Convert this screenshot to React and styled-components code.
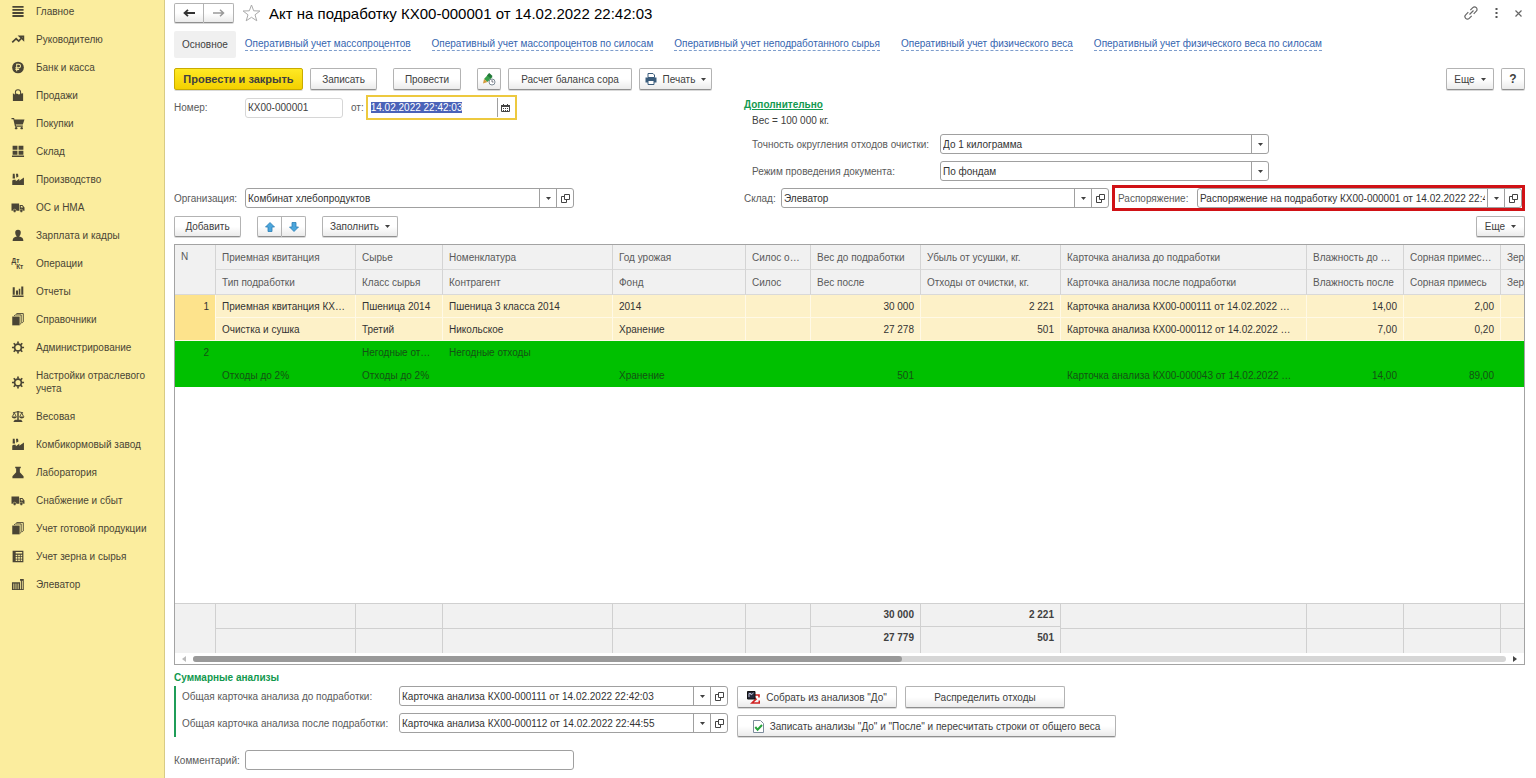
import { useEffect, useRef } from "react";
import styled, { createGlobalStyle } from "styled-components";

const menu = [
    ["main", "Главное"],
    ["trend", "Руководителю"],
    ["ruble", "Банк и касса"],
    ["bag", "Продажи"],
    ["cart", "Покупки"],
    ["boxes", "Склад"],
    ["factory", "Производство"],
    ["truck", "ОС и НМА"],
    ["person", "Зарплата и кадры"],
    ["dtkt", "Операции"],
    ["bars", "Отчеты"],
    ["books", "Справочники"],
    ["gear", "Администрирование"],
    ["gear", "Настройки отраслевого учета"],
    ["scales", "Весовая"],
    ["factory", "Комбикормовый завод"],
    ["flask", "Лаборатория"],
    ["truck", "Снабжение и сбыт"],
    ["books", "Учет готовой продукции"],
    ["ledger", "Учет зерна и сырья"],
    ["elevator", "Элеватор"],
];

const tabs = [
    "Оперативный учет массопроцентов",
    "Оперативный учет массопроцентов по силосам",
    "Оперативный учет неподработанного сырья",
    "Оперативный учет физического веса",
    "Оперативный учет физического веса по силосам",
];

const columns = [
    { top: "Приемная квитанция", bottom: "Тип подработки", width: 140 },
    { top: "Сырье", bottom: "Класс сырья", width: 87 },
    { top: "Номенклатура", bottom: "Контрагент", width: 170 },
    { top: "Год урожая", bottom: "Фонд", width: 133 },
    { top: "Силос о…", bottom: "Силос", width: 65 },
    { top: "Вес до подработки", bottom: "Вес после", width: 110, number: true, totals: ["30 000", "27 779"] },
    { top: "Убыль от усушки, кг.", bottom: "Отходы от очистки, кг.", width: 140, number: true, totals: ["2 221", "501"] },
    { top: "Карточка анализа до подработки", bottom: "Карточка анализа после подработки" },
    { top: "Влажность до …", bottom: "Влажность после", width: 97, number: true },
    { top: "Сорная примес…", bottom: "Сорная примесь", width: 97, number: true },
    { top: "Зер", bottom: "Зер", width: 24 },
];

const rows = [
    {
        top: ["Приемная квитанция КХ…", "Пшеница 2014", "Пшеница 3 класса 2014", "2014", "", "30 000", "2 221", "Карточка анализа КХ00-000111 от 14.02.2022 …", "14,00", "2,00", ""],
        bottom: ["Очистка и сушка", "Третий", "Никольское", "Хранение", "", "27 278", "501", "Карточка анализа КХ00-000112 от 14.02.2022 …", "7,00", "0,20", ""],
    },
    {
        waste: true,
        top: ["", "Негодные от…", "Негодные отходы", "", "", "", "", "", "", "", ""],
        bottom: ["Отходы до 2%", "Отходы до 2%", "", "Хранение", "", "501", "", "Карточка анализа КХ00-000043 от 14.02.2022 …", "14,00", "89,00", ""],
    },
];

function MenuIcon({ name }) {
    return (
        <MenuSvg viewBox="0 0 14 14" aria-hidden="true">
            {name === "main" && <path d="M1 1h12v2H1zM1 4.3h12v2H1zM1 7.6h12v2H1zM1 10.900h12v2H1z" />}
            {name === "trend" && <path d="M.8 10.2 5 6.2l2.8 2.5 3.6-3.9M8.8 3.6h4v3.8z" fill="none" stroke="#4a4535" strokeWidth="1.8" />}
            {name === "ruble" && (
                <>
                    <circle cx="7" cy="7" r="6.3" />
                    <path d="M5.6 11V3.6h2.2a1.9 1.9 0 0 1 0 3.8H4.2M4.2 9.2h4" fill="none" stroke="#fbed9e" strokeWidth="1.1" />
                </>
            )}
            {name === "bag" && (
                <>
                    <path d="M1.5 4.5 3.5 6l2-1.2L8 6l2.6-1.2 1.9-.3V13h-11z" />
                    <path d="M4.2 7V3.5a2.8 2.8 0 0 1 5.6 0V7" fill="none" stroke="#4a4535" strokeWidth="1.1" />
                </>
            )}
            {name === "cart" && (
                <>
                    <path d="M0 1.2h2.8l.4 1.4H14l-1.8 5.6H4.6l.3 1h7.3v1.2H3.8L2 2.4H0z" />
                    <circle cx="5" cy="12" r="1.3" />
                    <circle cx="11" cy="12" r="1.3" />
                </>
            )}
            {name === "boxes" && <path d="M1.2.8h5.2v4.4H1.2zM7.6.8h5.2v4.4H7.6zM1.2 6.1h5.2v4.4H1.2zM7.6 6.1h5.2v4.4H7.6zM.5 11.300h13V13H.5z" />}
            {name === "factory" && <path d="M.8 12.800V8.2l1.600-1h2.200v1.600l3.8-2.7v2.2l5-3.500v8zM1.4.8h2l.4 5H1.200zM4.800.8h2.200l.5 3-2.200 1.400z" />}
            {name === "truck" && (
                <>
                    <path d="M0 2.800h8.200v7.600H0zM8.800 4.2h3l2.200 2.800v3.400H8.800z" />
                    <path d="M10 5.4h1.4l1.2 1.6H10z" fill="#fbed9e" />
                    <circle cx="3.4" cy="10.6" r="1.7" stroke="#fbed9e" strokeWidth=".5" />
                    <circle cx="10.6" cy="10.6" r="1.7" stroke="#fbed9e" strokeWidth=".5" />
                </>
            )}
            {name === "person" && <path d="M7 .8a3 3 0 0 1 3 3c0 1.8-.9 3.7-1.8 4.2 2.8.5 4.6 1.6 4.6 4.8H1.200C1.200 9.600 3 8.500 5.800 8 4.900 7.500 4 5.600 4 3.800a3 3 0 0 1 3-3z" />}
            {name === "dtkt" && (
                <>
                    <text x="0" y="6" fontSize="7" fontWeight="700">Дт</text>
                    <text x="5" y="13" fontSize="7" fontWeight="700">Кт</text>
                </>
            )}
            {name === "bars" && <path d="M1.300 2.500h2.200v8H1.300zM4.800 6h2.200v4.500H4.800zM7.800 4h1.700v6.500H7.800zM10.500 1.500h2.200v9h-2.200zM1 11.300h12v1.500H1z" />}
            {name === "books" && (
                <>
                    <path d="M.8 3.800h8v9.500h-8z" />
                    <path d="M2.800 3 4 2.100h6.400v9l-1.200 1M5 1.200 5.800.6h6.900v9l-1.200 1" fill="none" stroke="#4a4535" />
                </>
            )}
            {name === "gear" && (
                <>
                    <circle cx="7" cy="7" r="3.7" fill="none" stroke="#4a4535" strokeWidth="1.9" />
                    <path d="M7 .5v2.500M7 11v2.500M.5 7H3M11 7h2.500M2.400 2.400l1.800 1.800M9.800 9.800l1.800 1.800M11.600 2.400 9.800 4.200M4.200 9.800l-1.800 1.800" stroke="#4a4535" strokeWidth="1.800" />
                </>
            )}
            {name === "scales" && (
                <>
                    <path d="M6.200 1h1.600v9.500h2.700l1.500 2.300H2l1.500-2.300h2.700zM0 7h6Q5.300 9.200 3 9.200.700 9.200 0 7zM8 7h6q-.7 2.200-3 2.200T8 7z" />
                    <path d="M1 7 3 3l2 4M9 7l2-4 2 4M1.500 3 7 1.800 12.500 3" fill="none" stroke="#4a4535" />
                </>
            )}
            {name === "flask" && <path d="M4 .8h6v1.500H9v4.500l4 4.300v2.100H1v-2.100l4-4.300V2.300H4z" />}
            {name === "ledger" && (
                <>
                    <path d="M1.200.8h11.600v12.400H1.200z" />
                    <path d="M4.500 2.200h7v1.500h-7zM4.500 5h1.800v1.700H4.500zM7.200 5H9v1.700H7.200zM9.900 5h1.600v1.700H9.900zM4.500 7.600h1.800v1.700H4.500zM7.200 7.600H9v1.700H7.200zM9.900 7.600h1.600v1.700H9.900zM4.500 10.200h1.800v1.700H4.500zM7.200 10.200H9v1.700H7.200zM9.900 10.200h1.600v1.700H9.900z" fill="#fbed9e" />
                </>
            )}
            {name === "elevator" && (
                <>
                    <path d="M.5 4.500h8.700V1h4v12H.5z" />
                    <path d="M2.500 6v6M4.800 6v6M7.200 6v6M9.700 3v9M11.700 3v9" stroke="#fbed9e" strokeWidth=".9" />
                </>
            )}
        </MenuSvg>
    );
}

function Caret() {
    return (
        <svg width="5" height="3" viewBox="0 0 5 3" aria-hidden="true">
            <path d="M0 0h5L2.500 3z" fill="#404040" />
        </svg>
    );
}

function OpenIcon() {
    return (
        <svg width="9" height="9" viewBox="0 0 9 9" fill="none" stroke="#444" aria-hidden="true">
            <path d="M3.500.5h5v5h-5zM3.500 2.500h-3v6h5v-3" />
        </svg>
    );
}

function Combo({ id, value, label }) {
    return (
        <Box>
            <BoxInput id={id} defaultValue={value} />
            <BoxButton aria-label={`${label}: выбрать`}><Caret /></BoxButton>
            <BoxButton aria-label={`${label}: открыть`}><OpenIcon /></BoxButton>
        </Box>
    );
}

function Choice({ id, value }) {
    return (
        <Box>
            <BoxSelect id={id} defaultValue={value}>
                <option>{value}</option>
            </BoxSelect>
            <SelectArrow><Caret /></SelectArrow>
        </Box>
    );
}

function TableLine({ cells, waste, number, first }) {
    return (
        <tr>
            {first && <RowNumber rowSpan={2} $waste={waste}>{number}</RowNumber>}
            {cells.map((text, i) => (
                <Cell key={i} $waste={waste} $right={columns[i].number}>{text}</Cell>
            ))}
        </tr>
    );
}

export default function App() {
    const dateRef = useRef(null);

    useEffect(() => {
        dateRef.current.focus();
        dateRef.current.select();
    }, []);

    return (
        <>
            <GlobalStyle />
            <Page>
                <Sidebar>
                    {menu.map(([icon, label]) => (
                        <MenuLink href="#" key={label}>
                            <MenuIcon name={icon} />
                            <span>{label}</span>
                        </MenuLink>
                    ))}
                </Sidebar>
                <Main>
                    <TitleBar>
                        <ButtonPair>
                            <Button $w={30} aria-label="Назад">
                                <svg width="12" height="8" viewBox="0 0 12 8" fill="none" stroke="#333" strokeWidth="1.8"><path d="M12 4H2M5 .8 1.500 4 5 7.200" /></svg>
                            </Button>
                            <Button $w={30} aria-label="Вперед">
                                <svg width="12" height="8" viewBox="0 0 12 8" fill="none" stroke="#999" strokeWidth="1.5"><path d="M0 4h10M7 .8 10.500 4 7 7.200" /></svg>
                            </Button>
                        </ButtonPair>
                        <PlainButton aria-label="Избранное">
                            <svg width="19" height="18" viewBox="0 0 19 18" fill="none" stroke="#aaa"><path d="m9.500 1 2.200 5.800 6.200.2-4.900 3.800 1.800 6-5.300-3.500-5.300 3.500 1.800-6L1.100 7l6.200-.2z" /></svg>
                        </PlainButton>
                        <Title>Акт на подработку КХ00-000001 от 14.02.2022 22:42:03</Title>
                        <WindowTools>
                            <PlainButton aria-label="Ссылка">
                                <svg width="14" height="14" viewBox="0 0 14 14" fill="none" stroke="#666" strokeWidth="1.2"><path d="m5.500 8.500 4-4M6.300 4.200l2.500-2.500a2.400 2.400 0 0 1 3.500 3.500L9.700 7.800M7.700 9.800l-2.500 2.500a2.400 2.400 0 0 1-3.500-3.500l2.600-2.600" /></svg>
                            </PlainButton>
                            <PlainButton aria-label="Меню">
                                <svg width="3" height="10" viewBox="0 0 3 10" fill="#555"><path d="M.5 0h2v2h-2zM.5 4h2v2h-2zM.5 8h2v2h-2z" /></svg>
                            </PlainButton>
                            <PlainButton aria-label="Закрыть">
                                <svg width="7" height="7" viewBox="0 0 7 7" stroke="#666" strokeWidth="1.2"><path d="m.5.5 6 6M6.500.5l-6 6" /></svg>
                            </PlainButton>
                        </WindowTools>
                    </TitleBar>

                    <Tabs>
                        <ActiveTab>Основное</ActiveTab>
                        {tabs.map((tab) => <TabLink href="#" key={tab}>{tab}</TabLink>)}
                    </Tabs>

                    <Commands>
                        <PrimaryButton $w={129}>Провести и закрыть</PrimaryButton>
                        <Group>
                            <Button $w={67}>Записать</Button>
                            <Button $w={68}>Провести</Button>
                            <Button $w={24} aria-label="Отложенное проведение">
                                <svg width="14" height="14" viewBox="0 0 14 14">
                                    <path d="m2 7 5-5.500L10.500 5l-5 5z" fill="#38a04a" />
                                    <path d="m5 3.500 2.200-2.500L10.500 4 8.500 6.200z" fill="#23783a" />
                                    <path d="m1 11.500 1-4.500 3.500 3z" fill="#d49b3d" />
                                    <circle cx="10" cy="10" r="3" fill="#fff" stroke="#7c8a94" />
                                    <path d="M10 8v2h1.500" fill="none" stroke="#556" strokeWidth=".8" />
                                </svg>
                            </Button>
                        </Group>
                        <Button $w={124}>Расчет баланса сора</Button>
                        <Button $w={73}>
                            <svg width="12" height="12" viewBox="0 0 12 12">
                                <path d="M3 .5h5L9.500 2v2.500H3z" fill="#fff" stroke="#3b5d7c" />
                                <path d="M.5 4.500h11v5H.5z" fill="#3b5d7c" />
                                <path d="M3 7.500h6v4H3z" fill="#fff" stroke="#3b5d7c" />
                            </svg>
                            Печать <Caret />
                        </Button>
                        <Spacer />
                        <Button $w={48}>Еще <Caret /></Button>
                        <HelpButton $w={24}>?</HelpButton>
                    </Commands>

                    <Form>
                        <NumberRow>
                            <Label htmlFor="number" $w={71}>Номер:</Label>
                            <NumberInput id="number" defaultValue="КХ00-000001" />
                            <Label htmlFor="date">от:</Label>
                            <DateBox>
                                <BoxInput id="date" ref={dateRef} defaultValue="14.02.2022 22:42:03" />
                                <BoxButton aria-label="Календарь">
                                    <svg width="9" height="8" viewBox="0 0 9 8"><path d="M.5 1.500h8v6h-8z" fill="#fff" stroke="#444" /><path d="M0 1h9v2H0zM2 0h1v2H2zM6 0h1v2H6zM2 4h1v1H2zM4 4h1v1H4zM6 4h1v1H6zM2 6h1v1H2zM4 6h1v1H4zM6 6h1v1H6z" fill="#444" /></svg>
                                </BoxButton>
                            </DateBox>
                        </NumberRow>
                        <Extra>
                            <ExtraLink href="#">Дополнительно</ExtraLink>
                            <Weight>Вес = 100 000 кг.</Weight>
                            <ChoiceRow>
                                <Label htmlFor="rounding" $w={188}>Точность округления отходов очистки:</Label>
                                <Choice id="rounding" value="До 1 килограмма" />
                            </ChoiceRow>
                            <ChoiceRow>
                                <Label htmlFor="mode" $w={188}>Режим проведения документа:</Label>
                                <Choice id="mode" value="По фондам" />
                            </ChoiceRow>
                        </Extra>
                        <FieldRow>
                            <Label htmlFor="org" $w={71}>Организация:</Label>
                            <Combo id="org" label="Организация" value="Комбинат хлебопродуктов" />
                        </FieldRow>
                        <StoreRow>
                            <Label htmlFor="store" $w={37}>Склад:</Label>
                            <Combo id="store" label="Склад" value="Элеватор" />
                            <Marked>
                                <Label htmlFor="order" $w={79}>Распоряжение:</Label>
                                <Combo id="order" label="Распоряжение" value="Распоряжение на подработку КХ00-000001 от 14.02.2022 22:42:03" />
                            </Marked>
                        </StoreRow>
                    </Form>

                    <TableBar>
                        <Button $w={67}>Добавить</Button>
                        <ButtonPair>
                            <Button $w={25} aria-label="Вверх">
                                <svg width="10" height="10" viewBox="0 0 10 10"><path d="m5 .5 4.500 4.500H7v4.500H3V5H.5z" fill="#4ba6dc" stroke="#2b7fb5" strokeWidth=".8" /></svg>
                            </Button>
                            <Button $w={24} aria-label="Вниз">
                                <svg width="10" height="10" viewBox="0 0 10 10"><path d="M5 9.500.5 5H3V.5h4V5h2.500z" fill="#4ba6dc" stroke="#2b7fb5" strokeWidth=".8" /></svg>
                            </Button>
                        </ButtonPair>
                        <Button $w={76}>Заполнить <Caret /></Button>
                        <Spacer />
                        <Button $w={49}>Еще <Caret /></Button>
                    </TableBar>

                    <TableFrame>
                        <Table>
                            <colgroup>
                                <col width="40" />
                                {columns.map((c) => <col key={c.top} width={c.width} />)}
                            </colgroup>
                            <thead>
                                <tr>
                                    <NumberHead rowSpan={2}>N</NumberHead>
                                    {columns.map((c) => <HeadCell key={c.top}>{c.top}</HeadCell>)}
                                </tr>
                                <tr>
                                    {columns.map((c) => <HeadCell key={c.top}>{c.bottom}</HeadCell>)}
                                </tr>
                            </thead>
                            <tbody>
                                {rows.map((row, i) => [
                                    <TableLine key={`${i}-top`} cells={row.top} waste={row.waste} number={i + 1} first />,
                                    <TableLine key={`${i}-bottom`} cells={row.bottom} waste={row.waste} />,
                                ])}
                                <tr>
                                    <EmptyArea colSpan={12} />
                                </tr>
                            </tbody>
                            <tfoot>
                                <tr>
                                    <TotalCell />
                                    {columns.map((c) => (
                                        <TotalCell key={c.top}>
                                            <TotalTop $filled={c.totals}>{c.totals?.[0]}</TotalTop>
                                            <TotalBottom>{c.totals?.[1]}</TotalBottom>
                                        </TotalCell>
                                    ))}
                                </tr>
                            </tfoot>
                        </Table>
                        <ScrollBar>
                            <svg width="4" height="6" viewBox="0 0 4 6"><path d="M4 0v6L0 3z" fill="#bbb" /></svg>
                            <ScrollTrack><ScrollThumb /></ScrollTrack>
                            <svg width="4" height="6" viewBox="0 0 4 6"><path d="M0 0v6l4-3z" fill="#444" /></svg>
                        </ScrollBar>
                    </TableFrame>

                    <GroupTitle>Суммарные анализы</GroupTitle>
                    <Summary>
                        <SummaryFields>
                            <FieldRow>
                                <Label htmlFor="before" $w={217}>Общая карточка анализа до подработки:</Label>
                                <Combo id="before" label="До подработки" value="Карточка анализа КХ00-000111 от 14.02.2022 22:42:03" />
                            </FieldRow>
                            <FieldRow>
                                <Label htmlFor="after" $w={217}>Общая карточка анализа после подработки:</Label>
                                <Combo id="after" label="После подработки" value="Карточка анализа КХ00-000112 от 14.02.2022 22:44:55" />
                            </FieldRow>
                        </SummaryFields>
                        <SummaryButtons>
                            <ButtonLine>
                                <Button $w={160}>
                                    <svg width="13" height="13" viewBox="0 0 13 13">
                                        <path d="M12 6.500V4H5l4 4.200L5 12h7.300V9.500" fill="none" stroke="#d02020" strokeWidth="1.6" />
                                        <path d="M.5.500h7.500v7.500H.5z" fill="#26283a" stroke="#111" />
                                        <path d="M2 6V2.500h2V4l2.500-2" fill="none" stroke="#b8bdd0" />
                                    </svg>
                                    Собрать из анализов "До"
                                </Button>
                                <Button $w={160}>Распределить отходы</Button>
                            </ButtonLine>
                            <Button $w={379}>
                                <svg width="11" height="13" viewBox="0 0 11 13">
                                    <path d="M.5.500h7l3 3v9H.5z" fill="#fff" stroke="#7d8c9c" />
                                    <path d="m2.300 7 2.300 2.800L9 5" fill="none" stroke="#26a33c" strokeWidth="2" />
                                </svg>
                                Записать анализы "До" и "После" и пересчитать строки от общего веса
                            </Button>
                        </SummaryButtons>
                    </Summary>
                    <CommentRow>
                        <Label htmlFor="comment" $w={71}>Комментарий:</Label>
                        <Box><BoxInput id="comment" /></Box>
                    </CommentRow>
                </Main>
            </Page>
        </>
    );
}

const GlobalStyle = createGlobalStyle`
    * {
        box-sizing: border-box;
    }

    body {
        margin: 0;
        background-color: #ffffff;
        overflow: hidden;
    }

    body, input, select, button {
        font-family: "Liberation Sans", Arial, sans-serif;
        font-size: 10px;
        color: #404040;
    }

    svg {
        flex-shrink: 0;
    }
`;

const Page = styled.div`
    display: flex;
    min-height: 100vh;
`;

const Sidebar = styled.nav`
    width: 165px;
    flex-shrink: 0;
    padding-top: 5px;
    background-color: #fbed9e;
    border-right: 1px solid #d8cb85;
`;

const MenuLink = styled.a`
    display: flex;
    align-items: center;
    gap: 11px;
    padding: 0 10px 0 11px;
    margin-bottom: 15px;
    line-height: 13px;
    color: #4a4535;
    text-decoration: none;
`;

const MenuSvg = styled.svg`
    width: 14px;
    height: 13px;
    fill: #4a4535;
`;

const Main = styled.main`
    flex: 1;
    min-width: 0;
    padding: 3px 11px 0 9px;
`;

const TitleBar = styled.header`
    display: flex;
    align-items: center;
    height: 20px;
    margin-bottom: 8px;
`;

const Title = styled.h1`
    margin: 0 0 0 8px;
    font-size: 15px;
    font-weight: 400;
    color: #000000;
    white-space: nowrap;
`;

const WindowTools = styled.div`
    display: flex;
    align-items: center;
    gap: 17px;
    margin-left: auto;
    padding-right: 3px;
`;

const PlainButton = styled.button`
    display: flex;
    padding: 0;
    border: none;
    background: none;
`;

const Button = styled.button`
    display: flex;
    align-items: center;
    justify-content: center;
    gap: 6px;
    height: 22px;
    min-width: ${(props) => props.$w}px;
    padding: 0;
    border: 1px solid #b3b3b3;
    border-bottom-color: #8f8f8f;
    border-radius: 2px;
    background: linear-gradient(#ffffff 50%, #ebebeb);
    box-shadow: 0 1px 0 #d9d9d9;
    white-space: nowrap;
`;

const PrimaryButton = styled(Button)`
    border-color: #c9ab00;
    background: linear-gradient(#ffe924, #f3d000);
    font-size: 11px;
    font-weight: 700;
`;

const HelpButton = styled(Button)`
    font-size: 12px;
    font-weight: 700;
`;

const ButtonPair = styled.div`
    display: flex;

    ${Button} {
        height: 20px;
    }

    ${Button}:first-child {
        border-radius: 2px 0 0 2px;
    }

    ${Button}:last-child {
        border-left: none;
        border-radius: 0 2px 2px 0;
    }

    & + ${PlainButton} {
        margin-left: 8px;
    }
`;

const Tabs = styled.nav`
    display: flex;
    align-items: center;
    gap: 21px;
    height: 27px;
    margin-bottom: 10px;
    white-space: nowrap;
`;

const ActiveTab = styled.span`
    padding: 7px 8px;
    margin-right: -12px;
    line-height: 13px;
    background-color: #f0f0f0;
    border-radius: 2px;
`;

const TabLink = styled.a`
    color: #3565af;
    line-height: 12px;
    text-decoration: none;
    border-bottom: 1px dashed #7d9dcc;
`;

const Commands = styled.div`
    display: flex;
    gap: 7px;
    margin-bottom: 5px;
`;

const Group = styled.div`
    display: flex;
    gap: 16px;
`;

const Spacer = styled.div`
    flex: 1;
`;

const Form = styled.div`
    display: grid;
    grid-template-columns: minmax(0, 570fr) minmax(0, 781fr);
    margin-bottom: 5px;
`;

const Label = styled.label`
    flex-shrink: 0;
    width: ${(props) => (props.$w ? `${props.$w}px` : "auto")};
    color: #5a5a5a;
    white-space: nowrap;
`;

const Box = styled.div`
    display: flex;
    flex: 1;
    min-width: 0;
    height: 20px;
    border: 1px solid #a0a0a0;
    border-radius: 3px;
    background-color: #ffffff;
    overflow: hidden;
`;

const BoxInput = styled.input`
    flex: 1;
    min-width: 0;
    padding: 0 2px;
    border: none;
    outline: none;
    background: none;
    color: #333333;

    &::selection {
        background-color: #4a62b8;
        color: #ffffff;
    }
`;

const BoxSelect = styled.select`
    flex: 1;
    padding: 0 2px;
    border: none;
    outline: none;
    appearance: none;
    background: none;
    color: #333333;
`;

const BoxButton = styled.button`
    display: flex;
    align-items: center;
    justify-content: center;
    width: 17px;
    padding: 0;
    border: none;
    border-left: 1px solid #a0a0a0;
    background: none;
`;

const SelectArrow = styled.span`
    display: flex;
    align-items: center;
    justify-content: center;
    width: 17px;
    border-left: 1px solid #a0a0a0;
    pointer-events: none;
`;

const NumberRow = styled.div`
    display: flex;
    align-items: center;
    height: 25px;
`;

const NumberInput = styled.input`
    width: 98px;
    height: 20px;
    margin-right: 8px;
    padding: 0 2px;
    border: 1px solid #d6d6d6;
    border-radius: 3px;
`;

const DateBox = styled(Box)`
    flex: none;
    width: 151px;
    height: 25px;
    margin-left: 2px;
    padding: 1px;
    border: 2px solid #edc93f;
    border-radius: 0;
`;

const Extra = styled.div`
    padding: 3px 0 0;
`;

const ExtraLink = styled.a`
    display: block;
    line-height: 13px;
    font-weight: 700;
    color: #12994f;
`;

const Weight = styled.div`
    padding: 3px 8px 6px;
    line-height: 14px;
`;

const ChoiceRow = styled.div`
    display: flex;
    align-items: center;
    max-width: 525px;
    padding-left: 8px;
    margin-bottom: 7px;
`;

const FieldRow = styled.div`
    display: flex;
    align-items: center;

    ${Form} & {
        max-width: 400px;
    }
`;

const StoreRow = styled.div`
    display: flex;
    align-items: center;
    margin-top: -3px;
    margin-bottom: -3px;
`;

const Marked = styled.div`
    display: flex;
    align-items: center;
    flex: 0 1 413px;
    min-width: 0;
    height: 26px;
    margin-left: 3px;
    padding-left: 3px;
    border: 3px solid #d01216;
`;

const TableBar = styled.div`
    display: flex;
    gap: 16px;
    margin-top: 8px;
    margin-bottom: 7px;

    ${Button} {
        height: 21px;
    }
`;

const TableFrame = styled.div`
    border: 1px solid #a3a3a3;
    overflow: hidden;
`;

const Table = styled.table`
    width: 100%;
    table-layout: fixed;
    border-collapse: separate;
    border-spacing: 0;

    td, th {
        overflow: hidden;
        white-space: nowrap;
    }
`;

const HeadCell = styled.th`
    height: 25px;
    padding: 0 0 0 6px;
    background-color: #f1f1f1;
    border-left: 1px solid #d4d4d4;
    border-bottom: 1px solid #d9d9d9;
    font-weight: 400;
    text-align: left;
    color: #5a5a5a;
`;

const NumberHead = styled(HeadCell)`
    padding-top: 6px;
    border-left: none;
    vertical-align: top;
`;

const Cell = styled.td`
    height: 23px;
    padding: 0 6px;
    background-color: ${(props) => (props.$waste ? "#00c000" : "#fdf1c8")};
    border-left: 1px solid ${(props) => (props.$waste ? "#00c000" : "#fff9e6")};
    border-bottom: 1px solid ${(props) => (props.$waste ? "#00c000" : "#fff9e6")};
    color: ${(props) => (props.$waste ? "#145214" : "#333333")};
    text-align: ${(props) => (props.$right ? "right" : "left")};
`;

const RowNumber = styled(Cell)`
    padding-top: 6px;
    border-left: none;
    background-color: ${(props) => (props.$waste ? "#00c000" : "#fde38c")};
    text-align: right;
    vertical-align: top;
`;

const EmptyArea = styled.td`
    height: calc(100vh - 562px);
    padding: 0;
`;

const TotalCell = styled.td`
    height: 50px;
    padding: 0;
    background-color: #f1f1f1;
    border-top: 1px solid #d0d0d0;
    font-weight: 700;
    text-align: right;
    vertical-align: top;

    & + & {
        border-left: 1px solid #d0d0d0;
    }
`;

const TotalTop = styled.div`
    height: ${(props) => (props.$filled ? 23 : 25)}px;
    padding-right: 6px;
    border-bottom: 1px solid #d0d0d0;
    line-height: 22px;
`;

const TotalBottom = styled.div`
    padding-right: 6px;
    line-height: 22px;
`;

const ScrollBar = styled.div`
    display: flex;
    align-items: center;
    gap: 7px;
    height: 11px;
    padding: 0 7px;
`;

const ScrollTrack = styled.div`
    flex: 1;
    height: 6px;
    border-radius: 3px;
    background-color: #d6d6d6;
`;

const ScrollThumb = styled.div`
    width: 54%;
    height: 6px;
    border-radius: 3px;
    background-color: #999999;
`;

const GroupTitle = styled.h2`
    margin: 6px 0 2px;
    line-height: 13px;
    font-size: 10px;
    font-weight: 700;
    color: #12994f;
`;

const Summary = styled.div`
    display: flex;
    gap: 9px;
    border-left: 2px solid #1f9d58;
    padding-left: 6px;
    height: 51px;
`;

const SummaryFields = styled.div`
    display: flex;
    flex-direction: column;
    gap: 7px;
    width: 546px;
`;

const SummaryButtons = styled.div`
    display: flex;
    flex-direction: column;
    align-items: flex-start;
    gap: 7px;
`;

const ButtonLine = styled.div`
    display: flex;
    gap: 8px;
`;

const CommentRow = styled.div`
    display: flex;
    align-items: center;
    max-width: 400px;
    margin-top: 13px;
`;
